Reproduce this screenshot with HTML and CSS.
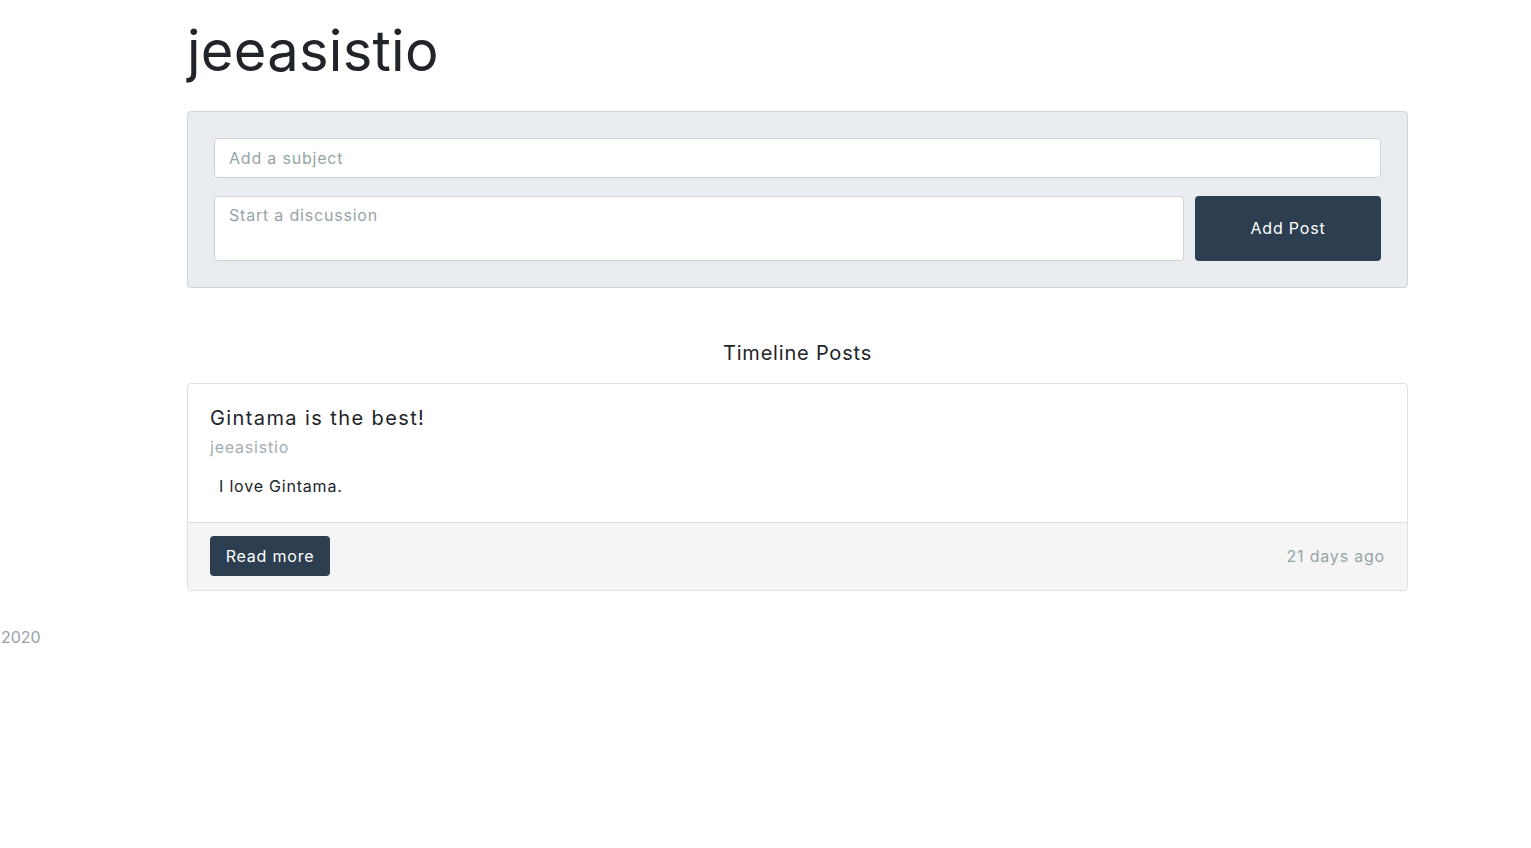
FILE: index.html
```html
<!DOCTYPE html>
<html lang="en">
<head>
<meta charset="utf-8">
<title>jeeasistio</title>
<link rel="stylesheet" href="styles.css">
</head>
<body>
<main class="page">
  <h1 class="username">jeeasistio</h1>
  <form class="composer">
    <input class="field subject" type="text" placeholder="Add a subject">
    <div class="composer-row">
      <textarea class="field body-field" placeholder="Start a discussion"></textarea>
      <button class="btn btn-add" type="button">Add Post</button>
    </div>
  </form>
  <h2 class="section-title">Timeline Posts</h2>
  <article class="card">
    <div class="card-body">
      <h3 class="card-title">Gintama is the best!</h3>
      <div class="card-author">jeeasistio</div>
      <p class="card-text">I love Gintama.</p>
    </div>
    <div class="card-footer">
      <button class="btn btn-read" type="button">Read more</button>
      <span class="time">21 days ago</span>
    </div>
  </article>
</main>
<footer class="year">2020</footer>
</body>
</html>
```
FILE: styles.css
```css
* { box-sizing: border-box; }
body {
  margin: 0;
  font-family: "Inter", "Open Sans", sans-serif;
  color: #212529;
  background: #fff;
  letter-spacing: 0.05em;
}
.page {
  margin-left: 187px;
  width: 1221px;
}
.username {
  margin: 0;
  padding-top: 18px;
  font-size: 56px;
  line-height: 67px;
  font-weight: 400;
  letter-spacing: 0.005em;
  margin-bottom: 26px;
}
.composer {
  margin: 0;
  background: #eaedef;
  border: 1px solid #cfd5d9;
  border-radius: 4px;
  padding: 26px;
}
.field {
  display: block;
  font-family: inherit;
  font-size: 16px;
  letter-spacing: 0.05em;
  color: #212529;
  background: #fff;
  border: 1px solid #ced4da;
  border-radius: 4px;
  padding: 0 14px;
}
.field::placeholder { color: #95a5a6; }
.subject { width: 100%; height: 40px; }
.composer-row {
  display: flex;
  gap: 11px;
  margin-top: 18px;
}
.body-field {
  flex: 1;
  height: 65px;
  resize: none;
  padding-top: 7px;
  line-height: 22px;
}
.btn {
  font-family: inherit;
  font-size: 16px;
  letter-spacing: 0.05em;
  color: #fff;
  background: #2c3e50;
  border: 0;
  border-radius: 4px;
}
.btn-add { width: 186px; height: 65px; padding-bottom: 2px; }
.section-title {
  margin: 50px 0 15px;
  text-align: center;
  font-size: 20px;
  line-height: 30px;
  font-weight: 400;
}
.card {
  border: 1px solid #dfdfdf;
  border-radius: 4px;
  overflow: hidden;
}
.card-body { padding: 22px 22px 24px; }
.card-title {
  margin: 0;
  font-size: 20px;
  line-height: 24px;
  font-weight: 400;
  letter-spacing: 0.07em;
}
.card-author {
  margin-top: 5px;
  font-size: 16px;
  line-height: 24px;
  color: #a3adb4;
}
.card-text {
  margin: 15px 0 0 9px;
  font-size: 16px;
  line-height: 24px;
}
.card-footer {
  display: flex;
  justify-content: space-between;
  align-items: center;
  background: #f5f5f5;
  border-top: 1px solid #dfdfdf;
  padding: 13px 22px 14px;
}
.btn-read { width: 120px; height: 40px; }
.time { color: #95a5a6; font-size: 16px; }
.year {
  margin-top: 34px;
  padding-left: 1px;
  font-size: 16px;
  line-height: 24px;
  letter-spacing: 0;
  color: #95a5a6;
}
```
